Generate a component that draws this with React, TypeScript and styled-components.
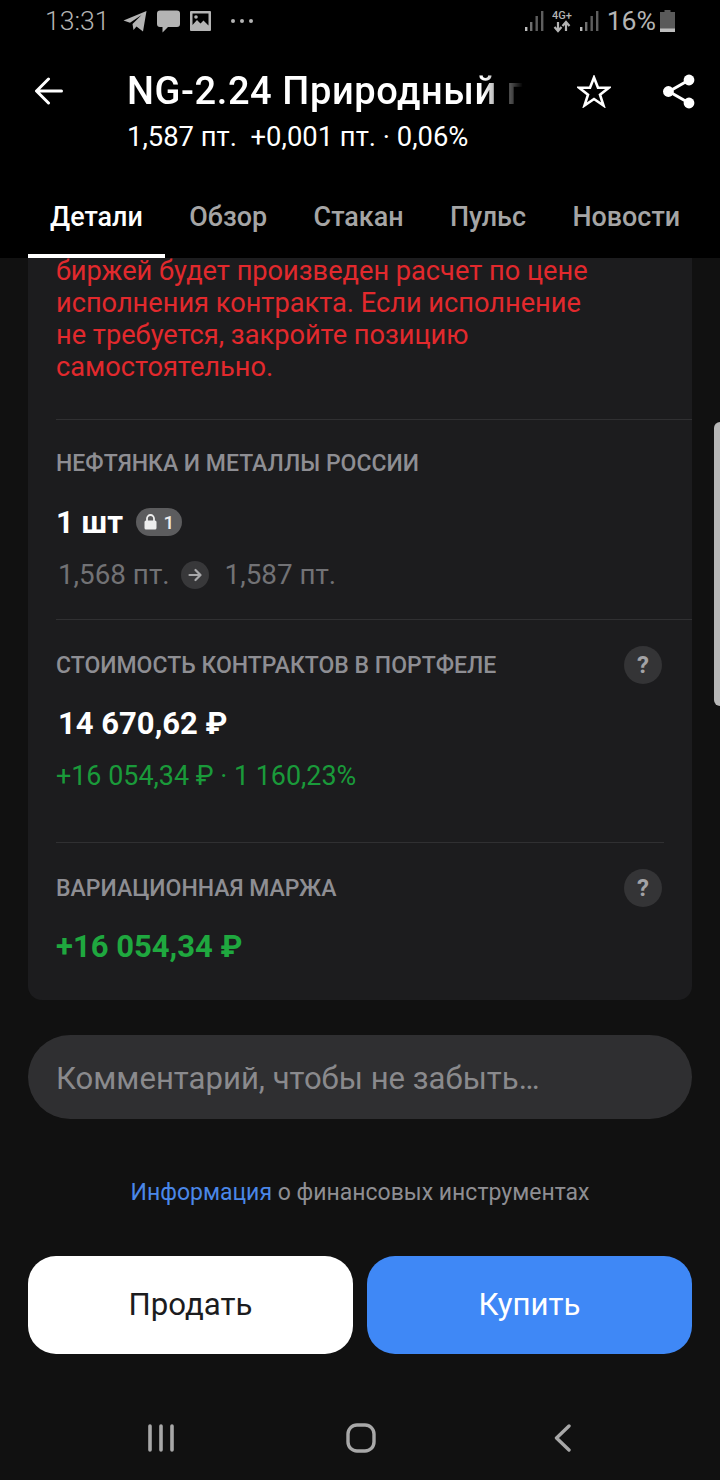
import React from "react";
import styled, { createGlobalStyle } from "styled-components";

const Global = createGlobalStyle`
  html, body { margin: 0; padding: 0; background: #111111; }
  * { box-sizing: border-box; }
  body { font-family: Roboto, "Noto Sans", sans-serif; }
`;

const Screen = styled.div`
  position: relative;
  width: 720px;
  height: 1480px;
  overflow: hidden;
  display: flex;
  flex-direction: column;
  background: #111111;
`;

const Header = styled.header`
  flex: none;
  height: 258px;
  background: #000;
  display: flex;
  flex-direction: column;
`;

const StatusBar = styled.div`
  height: 42px;
  padding: 0 45px 0 45px;
  display: flex;
  align-items: center;
  color: #b4b4b4;
`;

const StatusText = styled.span`
  font-size: 26.6px;
  line-height: 42px;
  font-weight: 300;
`;

const StatusLeft = styled.div`
  display: flex;
  align-items: center;
  gap: 10px;
  margin-left: 13px;
`;

const StatusRight = styled.div`
  margin-left: auto;
  display: flex;
  align-items: center;
  gap: 6px;
`;

const TitleRow = styled.div`
  margin-top: 26px;
  padding-left: 35px;
  display: flex;
  align-items: flex-start;
`;

const BackButton = styled.div`
  width: 92px;
  height: 46px;
  display: flex;
  align-items: center;
`;

const TitleBlock = styled.div`
  width: 396px;
  display: flex;
  flex-direction: column;
`;

const Title = styled.div`
  font-size: 38px;
  letter-spacing: 0.6px;
  line-height: 46px;
  font-weight: 500;
  color: #fff;
  white-space: nowrap;
  overflow: hidden;
  -webkit-mask-image: linear-gradient(to right, #000 90%, transparent 100%);
  mask-image: linear-gradient(to right, #000 90%, transparent 100%);
`;

const Subtitle = styled.div`
  margin-top: 5px;
  font-size: 27.4px;
  line-height: 36px;
  color: #fff;
  white-space: pre;
`;

const HeaderAction = styled.div<{ $gap: number }>`
  margin-left: ${(p) => p.$gap}px;
  height: 46px;
  display: flex;
  align-items: center;
`;

const Tabs = styled.nav`
  margin-top: auto;
  padding-left: 28px;
  display: flex;
  gap: 2.5px;
`;

const Tab = styled.div<{ $active?: boolean }>`
  padding: 0 22px 21px;
  font-size: 26.9px;
  line-height: 32px;
  font-weight: 500;
  color: ${(p) => (p.$active ? "#fff" : "#a5a5a5")};
  border-bottom: 4px solid ${(p) => (p.$active ? "#fff" : "transparent")};
`;

const Main = styled.main`
  flex: 1;
  min-height: 0;
  overflow: hidden;
  display: flex;
  flex-direction: column;
  padding: 0 28px;
`;

const Card = styled.section`
  flex: none;
  background: #1c1c1e;
  border-radius: 0 0 14px 14px;
  padding: 0 0 35px 28px;
`;

const Warning = styled.p`
  margin: -3px 0 0;
  padding-bottom: 36px;
  font-size: 27.2px;
  line-height: 32px;
  color: #e2292d;
`;

const Section = styled.div<{ $short?: boolean; $pad?: number }>`
  border-top: 1px solid #303032;
  margin-right: ${(p) => (p.$short ? 28 : 0)}px;
  padding: 26px ${(p) => (p.$short ? 2 : 30)}px ${(p) => p.$pad ?? 0}px 0;
`;

const LabelRow = styled.div`
  height: 38px;
  display: flex;
  align-items: center;
  justify-content: space-between;
`;

const Label = styled.div`
  padding-top: 2px;
  font-size: 23px;
  line-height: 32px;
  font-weight: 500;
  color: #8e8e93;
`;

const QtyRow = styled.div`
  margin-top: 25px;
  height: 36px;
  display: flex;
  align-items: center;
  gap: 13px;
`;

const HelpBadge = styled.div`
  width: 38px;
  height: 38px;
  border-radius: 50%;
  background: #343436;
  color: #a3a3a6;
  font-size: 24px;
  font-weight: 700;
  display: flex;
  align-items: center;
  justify-content: center;
`;

const Strong = styled.div<{ $green?: boolean; $top?: number }>`
  margin-top: ${(p) => p.$top ?? 0}px;
  font-size: 31px;
  line-height: 36px;
  font-weight: 700;
  color: ${(p) => (p.$green ? "#1fa83f" : "#fff")};
`;

const LockChip = styled.div`
  width: 46px;
  height: 28px;
  margin-top: -2px;
  border-radius: 14px;
  background: #5c5c5e;
  color: #eee;
  font-size: 19px;
  font-weight: 500;
  display: flex;
  align-items: center;
  justify-content: center;
  gap: 7px;
`;

const PriceRow = styled.div`
  margin-top: 18px;
  padding-left: 2px;
  display: flex;
  align-items: center;
  font-size: 27.8px;
  line-height: 32px;
  color: #727275;
`;

const ArrowDot = styled.div`
  width: 28px;
  height: 28px;
  margin: 0 16px 0 11px;
  border-radius: 50%;
  background: #38383a;
  display: flex;
  align-items: center;
  justify-content: center;
`;

const ProfitLine = styled.div`
  margin-top: 18px;
  font-size: 26.9px;
  line-height: 32px;
  color: #1a9a3a;
`;

const CommentField = styled.div`
  flex: none;
  margin-top: 35px;
  height: 84px;
  border-radius: 42px;
  background: #2f2f31;
  padding: 2px 28px 0;
  display: flex;
  align-items: center;
  font-size: 31.1px;
  color: #8a8a8d;
`;

const InfoLine = styled.div`
  margin-top: 58px;
  font-size: 23px;
  line-height: 32px;
  text-align: center;
  color: #8e8e93;
`;

const InfoLink = styled.span`
  color: #4a87e8;
`;

const Actions = styled.div`
  margin-top: 47px;
  display: grid;
  grid-template-columns: 1fr 1fr;
  gap: 14px;
`;

const ActionButton = styled.div<{ $primary?: boolean }>`
  height: 98px;
  padding-bottom: 2px;
  border-radius: 28px;
  background: ${(p) => (p.$primary ? "#3f88f6" : "#fff")};
  color: ${(p) => (p.$primary ? "#fff" : "#1c1c1e")};
  font-size: 31.2px;
  display: flex;
  align-items: center;
  justify-content: center;
`;

const NavBar = styled.footer`
  flex: none;
  height: 84px;
  padding: 0 148px;
  display: flex;
  align-items: center;
  justify-content: space-between;
`;

const ScrollThumb = styled.div`
  position: absolute;
  right: 0;
  top: 422px;
  width: 6px;
  height: 284px;
  border-radius: 6px 0 0 6px;
  background: #b8b8b8;
`;

function Signal() {
  return (
    <svg width="19" height="22" viewBox="0 0 19 22">
      <rect x="0" y="17" width="2.4" height="4" fill="#bdbdbd" />
      <rect x="5" y="12" width="2.4" height="9" fill="#6f6f6f" />
      <rect x="10.5" y="6" width="2.4" height="15" fill="#5e5e5e" />
      <rect x="16" y="1" width="2.4" height="20" fill="#5e5e5e" />
    </svg>
  );
}

export default function App() {
  return (
    <Screen>
      <Global />
      <Header>
        <StatusBar>
          <StatusText>13:31</StatusText>
          <StatusLeft>
            <svg width="24" height="22" viewBox="0 0 24 22">
              <path d="M0.5 10.5 L23.5 1 L20 21.5 L13.5 16.5 L10.5 20 L9.5 14 L18.5 5 L7 12.8 Z" fill="#b4b4b4" />
            </svg>
            <svg width="23" height="23" viewBox="0 0 23 23">
              <path d="M3 0.5 H20 a3 3 0 0 1 3 3 V14 a3 3 0 0 1 -3 3 H11 L5.5 22.5 V17 H3 a3 3 0 0 1 -3 -3 V3.5 a3 3 0 0 1 3 -3 Z" fill="#b4b4b4" />
            </svg>
            <svg width="21" height="20" viewBox="0 0 21 20">
              <path fillRule="evenodd" d="M1 0 H20 a1 1 0 0 1 1 1 V19 a1 1 0 0 1 -1 1 H1 a1 1 0 0 1 -1 -1 V1 a1 1 0 0 1 1 -1 Z M2.5 2.5 V14 L7 9 L10.5 12.5 L13.5 9.5 L18.5 14.5 V2.5 Z" fill="#b4b4b4" />
              <circle cx="6" cy="6" r="1.8" fill="#b4b4b4" />
            </svg>
            <svg width="24" height="6" viewBox="0 0 24 6" style={{ marginLeft: 9 }}>
              <circle cx="3" cy="3" r="2" fill="#b4b4b4" />
              <circle cx="12" cy="3" r="2" fill="#b4b4b4" />
              <circle cx="21" cy="3" r="2" fill="#b4b4b4" />
            </svg>
          </StatusLeft>
          <StatusRight>
            <Signal />
            <svg width="22" height="24" viewBox="0 0 22 24" style={{ marginLeft: 2 }}>
              <text x="0" y="10" fontSize="11" fontWeight="500" fill="#b4b4b4" fontFamily="Roboto, sans-serif">4G+</text>
              <path d="M6 13 V21 M2.5 18 L6 22 L9.5 18 M14 22 V14 M10.5 17 L14 13 L17.5 17" stroke="#b4b4b4" strokeWidth="2.2" fill="none" />
            </svg>
            <Signal />
            <StatusText style={{ marginLeft: 2, fontWeight: 400 }}>16%</StatusText>
            <svg width="15" height="22" viewBox="0 0 15 22" style={{ marginLeft: -2 }}>
              <path d="M4.5 0 H10.5 V2 H15 V22 H0 V2 H4.5 Z" fill="#5a5a5a" />
              <rect x="0" y="18.5" width="15" height="3.5" fill="#bdbdbd" />
            </svg>
          </StatusRight>
        </StatusBar>
        <TitleRow>
          <BackButton>
            <svg width="28" height="28" viewBox="0 0 28 28" fill="none" stroke="#fff" strokeWidth="3" strokeLinecap="round" strokeLinejoin="round">
              <path d="M26.5 14 H2 M13.5 2 L1.5 14 L13.5 26" />
            </svg>
          </BackButton>
          <TitleBlock>
            <Title>NG-2.24 Природный газ</Title>
            <Subtitle>1,587 пт.  +0,001 пт. · 0,06%</Subtitle>
          </TitleBlock>
          <HeaderAction $gap={54}>
            <svg width="34" height="33" viewBox="0 0 34 33" fill="none" stroke="#fff" strokeWidth="2.6" strokeLinejoin="miter">
              <path d="M17 2.5 L21 12.8 L31.8 12.8 L23 19.6 L26.5 30.5 L17 24 L7.5 30.5 L11 19.6 L2.2 12.8 L13 12.8 Z" />
            </svg>
          </HeaderAction>
          <HeaderAction $gap={52}>
            <svg width="32" height="35" viewBox="0 0 32 35">
              <path d="M26 6 L6 17.5 L26 29" fill="none" stroke="#fff" strokeWidth="3" />
              <circle cx="26" cy="6" r="5.4" fill="#fff" />
              <circle cx="26" cy="29" r="5.4" fill="#fff" />
              <circle cx="5.4" cy="17.5" r="5.4" fill="#fff" />
            </svg>
          </HeaderAction>
        </TitleRow>
        <Tabs>
          <Tab $active>Детали</Tab>
          <Tab>Обзор</Tab>
          <Tab>Стакан</Tab>
          <Tab>Пульс</Tab>
          <Tab>Новости</Tab>
        </Tabs>
      </Header>

      <Main>
        <Card>
          <Warning>
            биржей будет произведен расчет по цене
            <br />
            исполнения контракта. Если исполнение
            <br />
            не требуется, закройте позицию
            <br />
            самостоятельно.
          </Warning>
          <Section $pad={28}>
            <Label>НЕФТЯНКА И МЕТАЛЛЫ РОССИИ</Label>
            <QtyRow>
              <Strong>1 шт</Strong>
              <LockChip>
                <svg width="13" height="16" viewBox="0 0 13 16">
                  <path d="M3 7 V4.5 a3.5 3.5 0 0 1 7 0 V7" fill="none" stroke="#eee" strokeWidth="1.8" />
                  <rect x="0.5" y="6.5" width="12" height="9" rx="1.5" fill="#eee" />
                </svg>
                <span>1</span>
              </LockChip>
            </QtyRow>
            <PriceRow>
              <span>1,568 пт.</span>
              <ArrowDot>
                <svg width="14" height="14" viewBox="0 0 14 14" fill="none" stroke="#a8a8aa" strokeWidth="2.2" strokeLinecap="round" strokeLinejoin="round">
                  <path d="M1.5 7 H12 M7.5 2 L12.5 7 L7.5 12" />
                </svg>
              </ArrowDot>
              <span>1,587 пт.</span>
            </PriceRow>
          </Section>
          <Section $pad={50}>
            <LabelRow>
              <Label>СТОИМОСТЬ КОНТРАКТОВ В ПОРТФЕЛЕ</Label>
              <HelpBadge>?</HelpBadge>
            </LabelRow>
            <Strong $top={22} style={{ paddingLeft: 2 }}>14 670,62 ₽</Strong>
            <ProfitLine>+16 054,34 ₽ · 1 160,23%</ProfitLine>
          </Section>
          <Section $short>
            <LabelRow>
              <Label>ВАРИАЦИОННАЯ МАРЖА</Label>
              <HelpBadge>?</HelpBadge>
            </LabelRow>
            <Strong $green $top={22}>+16 054,34 ₽</Strong>
          </Section>
        </Card>

        <CommentField>Комментарий, чтобы не забыть…</CommentField>

        <InfoLine>
          <InfoLink>Информация</InfoLink> о финансовых инструментах
        </InfoLine>

        <Actions>
          <ActionButton>Продать</ActionButton>
          <ActionButton $primary>Купить</ActionButton>
        </Actions>
      </Main>

      <NavBar>
        <svg width="26" height="28" viewBox="0 0 26 28" stroke="#a8a8a8" strokeWidth="3.6" strokeLinecap="round">
          <path d="M2 2 V26 M13 2 V26 M24 2 V26" />
        </svg>
        <svg width="30" height="30" viewBox="0 0 30 30" fill="none" stroke="#a8a8a8" strokeWidth="3.4" style={{ marginLeft: -6 }}>
          <rect x="2" y="2" width="26" height="26" rx="9" />
        </svg>
        <svg width="18" height="28" viewBox="0 0 18 28" fill="none" stroke="#a8a8a8" strokeWidth="3.4" strokeLinecap="round" strokeLinejoin="round">
          <path d="M15 2 L2.5 14 L15 26" />
        </svg>
      </NavBar>
      <ScrollThumb />
    </Screen>
  );
}
